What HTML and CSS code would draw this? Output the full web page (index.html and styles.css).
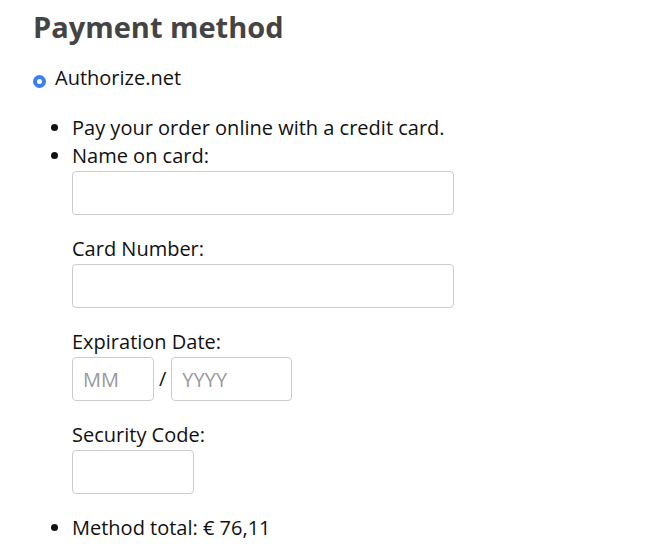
FILE: index.html
```html
<!DOCTYPE html>
<html>
<head>
<meta charset="utf-8">
<link rel="stylesheet" href="styles.css">
</head>
<body>
<div class="pane">
  <h2 class="title">Payment method</h2>
  <div class="method">
    <span class="radio"></span>
    <label class="method-label">Authorize.net</label>
  </div>
  <ul class="details">
    <li>Pay your order online with a credit card.</li>
    <li>
      <div class="field-label">Name on card:</div>
      <input class="input input-wide" type="text">
      <div class="field-label spaced">Card Number:</div>
      <input class="input input-wide" type="text">
      <div class="field-label spaced">Expiration Date:</div>
      <div class="exp">
        <input class="input input-mm" type="text" placeholder="MM">
        <span class="slash">/</span>
        <input class="input input-yy" type="text" placeholder="YYYY">
      </div>
      <div class="field-label spaced">Security Code:</div>
      <input class="input input-cvv" type="text">
    </li>
    <li class="total">Method total: € 76,11</li>
  </ul>
</div>
</body>
</html>
```

FILE: styles.css
```css
html, body {
  margin: 0;
  padding: 0;
  background: #fff;
}
body {
  font-family: "Open Sans", "DejaVu Sans", sans-serif;
  color: #111;
  font-size: 20px;
  line-height: 28px;
}
.pane {
  padding: 7px 33px;
}
.title {
  margin: 0;
  font-size: 29px;
  font-weight: 700;
  color: #444;
  line-height: 40px;
}
.method {
  display: flex;
  align-items: center;
  gap: 9px;
  margin-top: 17px;
}
.radio {
  flex: none;
  width: 13px;
  height: 13px;
  border-radius: 50%;
  background: #3a80f0;
  position: relative;
  margin-top: 7px;
}
.radio::after {
  content: "";
  position: absolute;
  left: 4px;
  top: 4px;
  width: 5px;
  height: 5px;
  border-radius: 50%;
  background: #fff;
}
.details {
  margin: 22px 0 0 0;
  padding-left: 39px;
}
.details li {
  margin: 0;
}
.field-label {
  display: block;
}
.spaced {
  margin-top: 20px;
}
.input {
  display: block;
  box-sizing: border-box;
  height: 44px;
  border: 1px solid #ccc;
  border-radius: 4px;
  font-family: "Open Sans", sans-serif;
  font-size: 20px;
  padding: 0 10px;
  margin-top: 1px;
  background: #fff;
}
.input::placeholder {
  color: #9a9a9a;
}
.input-wide { width: 382px; }
.input-cvv { width: 122px; }
.exp {
  display: flex;
  align-items: center;
  gap: 5px;
  margin-top: 1px;
}
.exp .input { margin-top: 0; }
.input-mm { width: 82px; }
.input-yy { width: 121px; }
.details .total {
  margin-top: 20px;
}
```
